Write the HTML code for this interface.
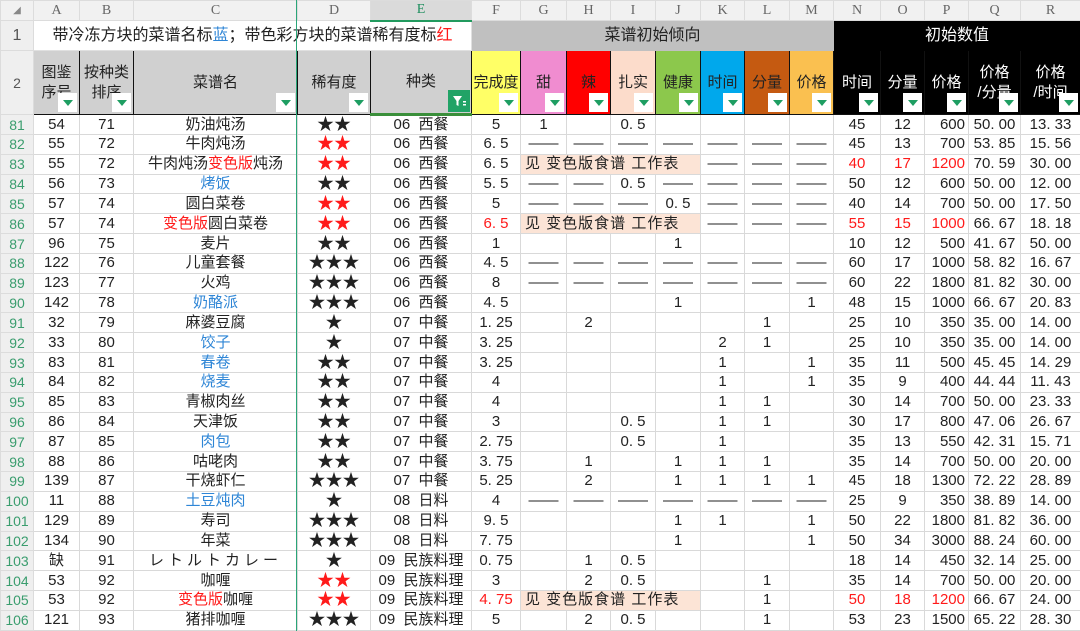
<!DOCTYPE html>
<html><head><meta charset="utf-8">
<style>
*{margin:0;padding:0;box-sizing:border-box}
body{width:1080px;height:631px;overflow:hidden;background:#fff;font-family:"Liberation Sans","Noto Sans CJK SC",sans-serif;font-size:15px;color:#222;position:relative}
table{border-collapse:collapse;table-layout:fixed;width:1080px;position:absolute;left:0;top:0}
td{border:1px solid #d9d9d9;text-align:center;white-space:nowrap;overflow:hidden;position:relative;padding:0;line-height:18px}
tr.d td{height:19.84px}
tr.d td:nth-child(5){font-size:17px}
td.rn{background:#efefef;color:#3a9d6e;font-size:14px;border-color:#dcdcdc}
tr.hd td{height:20px;background:#f1f1f1;color:#666;font-family:"Liberation Serif",serif;font-size:14px;border-color:#dcdcdc}
tr.hd td.sel{background:#dadada;color:#1f8f5e;border-bottom:2px solid #219a5e}
tr.r1 td{height:30px;font-size:16px}
tr.r2 td{height:64px;border:1px solid #111;line-height:20px}
.g{background:#d0d0d0}
.red{color:#ff1a1a}
.blu{color:#2f86d6}
.pe{background:#fce4d6;text-align:left;padding-left:4px;letter-spacing:1px}
.r{text-align:right;padding-right:3px}
.fb{position:absolute;right:2px;bottom:2px;width:19px;height:19px;background:#fff}
.fb:after{content:"";position:absolute;left:5px;top:7px;border-left:5px solid transparent;border-right:5px solid transparent;border-top:6px solid #1e9e62}
.fg{position:absolute;right:1px;bottom:1px;width:22px;height:22px;background:#21a366}
.wt{color:#fff}
#fz{position:absolute;left:296px;top:0;width:1px;height:631px;background:#2aa578}
</style></head><body>
<table>
<colgroup>
<col style="width:33px"><col style="width:46px"><col style="width:54px"><col style="width:164px"><col style="width:73px"><col style="width:101px">
<col style="width:49px"><col style="width:46px"><col style="width:44px"><col style="width:45px"><col style="width:45px"><col style="width:44px"><col style="width:45px"><col style="width:44px">
<col style="width:47px"><col style="width:44px"><col style="width:44px"><col style="width:52px"><col style="width:60px">
</colgroup>
<tr class="hd"><td style="font-size:10px;color:#888">◢</td><td>A</td><td>B</td><td>C</td><td>D</td><td class="sel">E</td><td>F</td><td>G</td><td>H</td><td>I</td><td>J</td><td>K</td><td>L</td><td>M</td><td>N</td><td>O</td><td>P</td><td>Q</td><td>R</td></tr>
<tr class="r1"><td class="rn" style="color:#555">1</td><td colspan="5" style="border-color:#e0e0e0">带冷冻方块的菜谱名标<span class="blu">蓝</span>；带色彩方块的菜谱稀有度标<span class="red">红</span></td><td colspan="8" style="background:#c0c0c0;border-color:#c0c0c0">菜谱初始倾向</td><td colspan="5" style="background:#000;color:#fff;border-color:#000">初始数值</td></tr>
<tr class="r2"><td class="rn" style="color:#555;border-color:#dcdcdc">2</td>
<td class="g" style="vertical-align:top;padding-top:12px">图鉴<br>序号<div class="fb"></div></td>
<td class="g" style="vertical-align:top;padding-top:12px">按种类<br>排序<div class="fb"></div></td>
<td class="g">菜谱名<div class="fb"></div></td>
<td class="g">稀有度<div class="fb"></div></td>
<td class="g" style="border-bottom:3px solid #3a8f3a">种类<div class="fg"><svg width="22" height="22"><path d="M5 6h9l-3.5 5v5l-2-1v-4z" fill="#fff"/><rect x="15" y="11" width="3" height="1.5" fill="#fff"/><rect x="15" y="14" width="3" height="1.5" fill="#fff"/></svg></div></td>
<td style="background:#ffff66">完成度<div class="fb"></div></td>
<td style="background:#f08cd0">甜<div class="fb"></div></td>
<td style="background:#ff0000">辣<div class="fb"></div></td>
<td style="background:#fcdccb">扎实<div class="fb"></div></td>
<td style="background:#8cc84c">健康<div class="fb"></div></td>
<td style="background:#00a8ec">时间<div class="fb"></div></td>
<td style="background:#c55a11">分量<div class="fb"></div></td>
<td style="background:#fac050">价格<div class="fb"></div></td>
<td style="background:#000" class="wt">时间<div class="fb"></div></td>
<td style="background:#000" class="wt">分量<div class="fb"></div></td>
<td style="background:#000" class="wt">价格<div class="fb"></div></td>
<td style="background:#000;vertical-align:top;padding-top:12px" class="wt">价格<br>/分量<div class="fb"></div></td>
<td style="background:#000;vertical-align:top;padding-top:12px" class="wt">价格<br>/时间<div class="fb"></div></td>
</tr>
<tr class="d"><td class="rn">81</td><td>54</td><td>71</td><td>奶油炖汤</td><td>★★</td><td>06&nbsp; 西餐</td><td>5</td><td>1</td><td></td><td>0. 5</td><td></td><td></td><td></td><td></td><td>45</td><td>12</td><td class="r">600</td><td>50. 00</td><td>13. 33</td></tr>
<tr class="d"><td class="rn">82</td><td>55</td><td>72</td><td>牛肉炖汤</td><td class="red">★★</td><td>06&nbsp; 西餐</td><td>6. 5</td><td>——</td><td>——</td><td>——</td><td>——</td><td>——</td><td>——</td><td>——</td><td>45</td><td>13</td><td class="r">700</td><td>53. 85</td><td>15. 56</td></tr>
<tr class="d"><td class="rn">83</td><td>55</td><td>72</td><td>牛肉炖汤<span class="red">变色版</span>炖汤</td><td class="red">★★</td><td>06&nbsp; 西餐</td><td>6. 5</td><td colspan="4" class="pe">见 变色版食谱 工作表</td><td>——</td><td>——</td><td>——</td><td class="red">40</td><td class="red">17</td><td class="r red">1200</td><td>70. 59</td><td>30. 00</td></tr>
<tr class="d"><td class="rn">84</td><td>56</td><td>73</td><td class="blu">烤饭</td><td>★★</td><td>06&nbsp; 西餐</td><td>5. 5</td><td>——</td><td>——</td><td>0. 5</td><td>——</td><td>——</td><td>——</td><td>——</td><td>50</td><td>12</td><td class="r">600</td><td>50. 00</td><td>12. 00</td></tr>
<tr class="d"><td class="rn">85</td><td>57</td><td>74</td><td>圆白菜卷</td><td class="red">★★</td><td>06&nbsp; 西餐</td><td>5</td><td>——</td><td>——</td><td>——</td><td>0. 5</td><td>——</td><td>——</td><td>——</td><td>40</td><td>14</td><td class="r">700</td><td>50. 00</td><td>17. 50</td></tr>
<tr class="d"><td class="rn">86</td><td>57</td><td>74</td><td><span class="red">变色版</span>圆白菜卷</td><td class="red">★★</td><td>06&nbsp; 西餐</td><td class="red">6. 5</td><td colspan="4" class="pe">见 变色版食谱 工作表</td><td>——</td><td>——</td><td>——</td><td class="red">55</td><td class="red">15</td><td class="r red">1000</td><td>66. 67</td><td>18. 18</td></tr>
<tr class="d"><td class="rn">87</td><td>96</td><td>75</td><td>麦片</td><td>★★</td><td>06&nbsp; 西餐</td><td>1</td><td></td><td></td><td></td><td>1</td><td></td><td></td><td></td><td>10</td><td>12</td><td class="r">500</td><td>41. 67</td><td>50. 00</td></tr>
<tr class="d"><td class="rn">88</td><td>122</td><td>76</td><td>儿童套餐</td><td>★★★</td><td>06&nbsp; 西餐</td><td>4. 5</td><td>——</td><td>——</td><td>——</td><td>——</td><td>——</td><td>——</td><td>——</td><td>60</td><td>17</td><td class="r">1000</td><td>58. 82</td><td>16. 67</td></tr>
<tr class="d"><td class="rn">89</td><td>123</td><td>77</td><td>火鸡</td><td>★★★</td><td>06&nbsp; 西餐</td><td>8</td><td>——</td><td>——</td><td>——</td><td>——</td><td>——</td><td>——</td><td>——</td><td>60</td><td>22</td><td class="r">1800</td><td>81. 82</td><td>30. 00</td></tr>
<tr class="d"><td class="rn">90</td><td>142</td><td>78</td><td class="blu">奶酪派</td><td>★★★</td><td>06&nbsp; 西餐</td><td>4. 5</td><td></td><td></td><td></td><td>1</td><td></td><td></td><td>1</td><td>48</td><td>15</td><td class="r">1000</td><td>66. 67</td><td>20. 83</td></tr>
<tr class="d"><td class="rn">91</td><td>32</td><td>79</td><td>麻婆豆腐</td><td>★</td><td>07&nbsp; 中餐</td><td>1. 25</td><td></td><td>2</td><td></td><td></td><td></td><td>1</td><td></td><td>25</td><td>10</td><td class="r">350</td><td>35. 00</td><td>14. 00</td></tr>
<tr class="d"><td class="rn">92</td><td>33</td><td>80</td><td class="blu">饺子</td><td>★</td><td>07&nbsp; 中餐</td><td>3. 25</td><td></td><td></td><td></td><td></td><td>2</td><td>1</td><td></td><td>25</td><td>10</td><td class="r">350</td><td>35. 00</td><td>14. 00</td></tr>
<tr class="d"><td class="rn">93</td><td>83</td><td>81</td><td class="blu">春卷</td><td>★★</td><td>07&nbsp; 中餐</td><td>3. 25</td><td></td><td></td><td></td><td></td><td>1</td><td></td><td>1</td><td>35</td><td>11</td><td class="r">500</td><td>45. 45</td><td>14. 29</td></tr>
<tr class="d"><td class="rn">94</td><td>84</td><td>82</td><td class="blu">烧麦</td><td>★★</td><td>07&nbsp; 中餐</td><td>4</td><td></td><td></td><td></td><td></td><td>1</td><td></td><td>1</td><td>35</td><td>9</td><td class="r">400</td><td>44. 44</td><td>11. 43</td></tr>
<tr class="d"><td class="rn">95</td><td>85</td><td>83</td><td>青椒肉丝</td><td>★★</td><td>07&nbsp; 中餐</td><td>4</td><td></td><td></td><td></td><td></td><td>1</td><td>1</td><td></td><td>30</td><td>14</td><td class="r">700</td><td>50. 00</td><td>23. 33</td></tr>
<tr class="d"><td class="rn">96</td><td>86</td><td>84</td><td>天津饭</td><td>★★</td><td>07&nbsp; 中餐</td><td>3</td><td></td><td></td><td>0. 5</td><td></td><td>1</td><td>1</td><td></td><td>30</td><td>17</td><td class="r">800</td><td>47. 06</td><td>26. 67</td></tr>
<tr class="d"><td class="rn">97</td><td>87</td><td>85</td><td class="blu">肉包</td><td>★★</td><td>07&nbsp; 中餐</td><td>2. 75</td><td></td><td></td><td>0. 5</td><td></td><td>1</td><td></td><td></td><td>35</td><td>13</td><td class="r">550</td><td>42. 31</td><td>15. 71</td></tr>
<tr class="d"><td class="rn">98</td><td>88</td><td>86</td><td>咕咾肉</td><td>★★</td><td>07&nbsp; 中餐</td><td>3. 75</td><td></td><td>1</td><td></td><td>1</td><td>1</td><td>1</td><td></td><td>35</td><td>14</td><td class="r">700</td><td>50. 00</td><td>20. 00</td></tr>
<tr class="d"><td class="rn">99</td><td>139</td><td>87</td><td>干烧虾仁</td><td>★★★</td><td>07&nbsp; 中餐</td><td>5. 25</td><td></td><td>2</td><td></td><td>1</td><td>1</td><td>1</td><td>1</td><td>45</td><td>18</td><td class="r">1300</td><td>72. 22</td><td>28. 89</td></tr>
<tr class="d"><td class="rn">100</td><td>11</td><td>88</td><td class="blu">土豆炖肉</td><td>★</td><td>08&nbsp; 日料</td><td>4</td><td>——</td><td>——</td><td>——</td><td>——</td><td>——</td><td>——</td><td>——</td><td>25</td><td>9</td><td class="r">350</td><td>38. 89</td><td>14. 00</td></tr>
<tr class="d"><td class="rn">101</td><td>129</td><td>89</td><td>寿司</td><td>★★★</td><td>08&nbsp; 日料</td><td>9. 5</td><td></td><td></td><td></td><td>1</td><td>1</td><td></td><td>1</td><td>50</td><td>22</td><td class="r">1800</td><td>81. 82</td><td>36. 00</td></tr>
<tr class="d"><td class="rn">102</td><td>134</td><td>90</td><td>年菜</td><td>★★★</td><td>08&nbsp; 日料</td><td>7. 75</td><td></td><td></td><td></td><td>1</td><td></td><td></td><td>1</td><td>50</td><td>34</td><td class="r">3000</td><td>88. 24</td><td>60. 00</td></tr>
<tr class="d"><td class="rn">103</td><td>缺</td><td>91</td><td style="letter-spacing:4px">レトルトカレー</td><td>★</td><td>09&nbsp; 民族料理</td><td>0. 75</td><td></td><td>1</td><td>0. 5</td><td></td><td></td><td></td><td></td><td>18</td><td>14</td><td class="r">450</td><td>32. 14</td><td>25. 00</td></tr>
<tr class="d"><td class="rn">104</td><td>53</td><td>92</td><td>咖喱</td><td class="red">★★</td><td>09&nbsp; 民族料理</td><td>3</td><td></td><td>2</td><td>0. 5</td><td></td><td></td><td>1</td><td></td><td>35</td><td>14</td><td class="r">700</td><td>50. 00</td><td>20. 00</td></tr>
<tr class="d"><td class="rn">105</td><td>53</td><td>92</td><td><span class="red">变色版</span>咖喱</td><td class="red">★★</td><td>09&nbsp; 民族料理</td><td class="red">4. 75</td><td colspan="4" class="pe">见 变色版食谱 工作表</td><td></td><td>1</td><td></td><td class="red">50</td><td class="red">18</td><td class="r red">1200</td><td>66. 67</td><td>24. 00</td></tr>
<tr class="d"><td class="rn">106</td><td>121</td><td>93</td><td>猪排咖喱</td><td>★★★</td><td>09&nbsp; 民族料理</td><td>5</td><td></td><td>2</td><td>0. 5</td><td></td><td></td><td>1</td><td></td><td>53</td><td>23</td><td class="r">1500</td><td>65. 22</td><td>28. 30</td></tr>
</table>
<div id="fz"></div>
</body></html>
